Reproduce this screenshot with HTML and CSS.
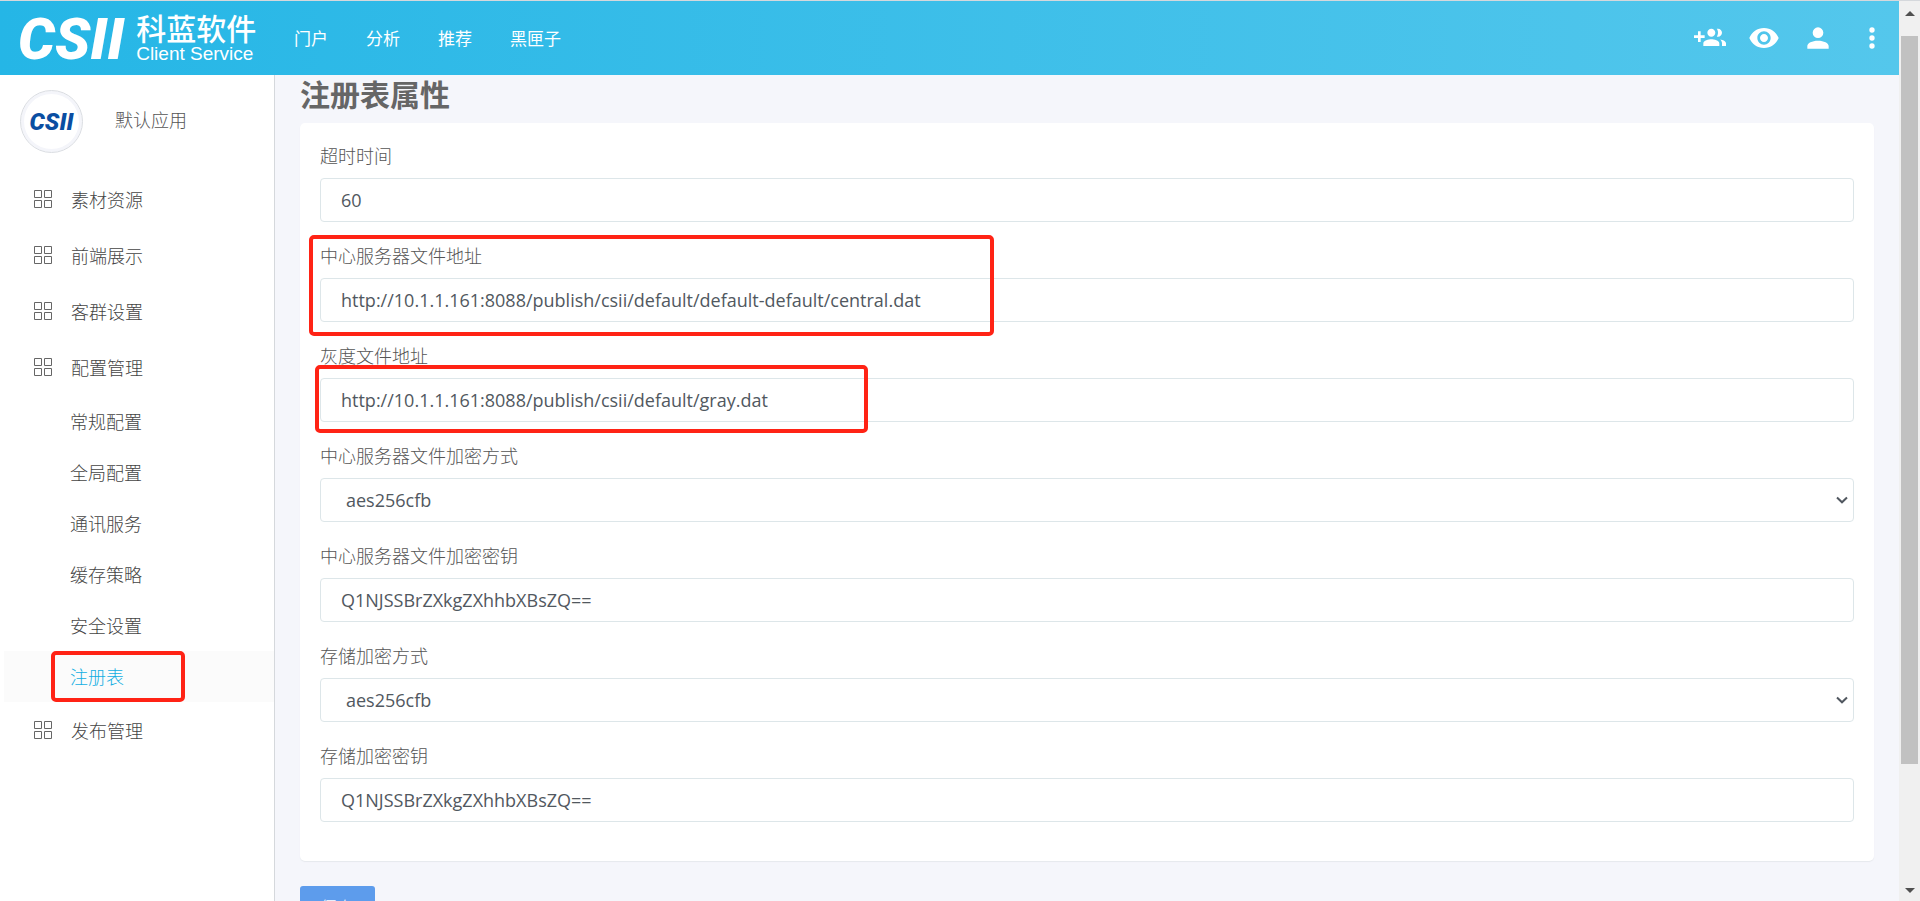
FILE: index.html
```html
<!DOCTYPE html>
<html lang="zh-CN">
<head>
<meta charset="utf-8">
<title>注册表属性</title>
<link rel="stylesheet" href="styles.css">
</head>
<body>
<svg class="defs" aria-hidden="true">
  <symbol id="grid" viewBox="0 0 18 18"><path fill="none" stroke="currentColor" d="M.5.5h7v7h-7zM10.500.5h7v7h-7zM.5 10.500h7v7h-7zM10.500 10.500h7v7h-7z"/></symbol>
  <symbol id="chevron" viewBox="0 0 12 8"><path fill="none" stroke="currentColor" stroke-width="2" d="M1 1.500 6 6.300 11 1.500"/></symbol>
</svg>
<div class="app">
  <header class="topbar">
    <a class="brand" href="#">
      <span class="mark">CSII</span>
      <span class="brand-text"><span class="brand-cn">科蓝软件</span><span class="brand-en">Client Service</span></span>
    </a>
    <nav class="topnav">
      <a href="#">门户</a><a href="#">分析</a><a href="#">推荐</a><a href="#">黑匣子</a>
    </nav>
    <div class="actions">
      <button type="button" aria-label="添加用户"><svg viewBox="0 0 24 24"><path d="M13 13C11 13 7 14 7 16V18H19V16C19 14 15 13 13 13M19.620 13.160C20.450 13.880 21 14.820 21 16V18H24V16C24 14.460 21.630 13.500 19.620 13.160M13 11C14.660 11 16 9.660 16 8S14.660 5 13 5 10 6.340 10 8 11.340 11 13 11M18 11C19.660 11 21 9.660 21 8S19.660 5 18 5C17.680 5 17.370 5.050 17.080 5.140C17.650 5.950 18 6.940 18 8S17.650 10.040 17.080 10.850C17.370 10.950 17.680 11 18 11M8 10H5V7H3V10H0V12H3V15H5V12H8V10Z"/></svg></button>
      <button type="button" aria-label="查看"><svg viewBox="0 0 24 24"><path d="M12 4.500C7 4.500 2.730 7.610 1 12c1.730 4.390 6 7.500 11 7.500s9.270-3.110 11-7.500c-1.730-4.390-6-7.500-11-7.500zM12 17c-2.760 0-5-2.240-5-5s2.240-5 5-5 5 2.240 5 5-2.240 5-5 5zm0-8c-1.660 0-3 1.340-3 3s1.340 3 3 3 3-1.340 3-3-1.340-3-3-3z"/></svg></button>
      <button type="button" aria-label="用户"><svg viewBox="0 0 24 24"><path d="M12 4a4 4 0 1 1 0 8 4 4 0 0 1 0-8m0 10c4.420 0 8 1.790 8 4v2H4v-2c0-2.210 3.580-4 8-4z"/></svg></button>
      <button type="button" aria-label="更多"><svg viewBox="0 0 24 24"><path d="M12 16a2 2 0 1 1 0 4 2 2 0 0 1 0-4m0-6a2 2 0 1 1 0 4 2 2 0 0 1 0-4m0-6a2 2 0 1 1 0 4 2 2 0 0 1 0-4z"/></svg></button>
    </div>
  </header>
  <aside class="sidebar">
    <div class="profile">
      <span class="avatar"><span class="mark mark-small">CSII</span></span>
      <span class="profile-name">默认应用</span>
    </div>
    <nav class="menu">
      <a class="item" href="#"><svg><use href="#grid"/></svg>素材资源</a>
      <a class="item" href="#"><svg><use href="#grid"/></svg>前端展示</a>
      <a class="item" href="#"><svg><use href="#grid"/></svg>客群设置</a>
      <a class="item" href="#"><svg><use href="#grid"/></svg>配置管理</a>
      <div class="submenu">
        <a href="#">常规配置</a>
        <a href="#">全局配置</a>
        <a href="#">通讯服务</a>
        <a href="#">缓存策略</a>
        <a href="#">安全设置</a>
        <a class="active" href="#">注册表<span class="marker marker-menu"></span></a>
      </div>
      <a class="item" href="#"><svg><use href="#grid"/></svg>发布管理</a>
    </nav>
  </aside>
  <main class="content">
    <h1>注册表属性</h1>
    <form>
      <div class="card">
        <div class="field"><label for="timeout">超时时间</label><input id="timeout" type="text" value="60"></div>
        <div class="field"><label for="central">中心服务器文件地址</label><input id="central" type="text" value="http://10.1.1.161:8088/publish/csii/default/default-default/central.dat"><span class="marker marker-central"></span></div>
        <div class="field"><label for="gray">灰度文件地址</label><input id="gray" type="text" value="http://10.1.1.161:8088/publish/csii/default/gray.dat"><span class="marker marker-gray"></span></div>
        <div class="field"><label for="central-mode">中心服务器文件加密方式</label><select id="central-mode"><option>aes256cfb</option></select><svg class="chevron"><use href="#chevron"/></svg></div>
        <div class="field"><label for="central-key">中心服务器文件加密密钥</label><input id="central-key" type="text" value="Q1NJSSBrZXkgZXhhbXBsZQ=="></div>
        <div class="field"><label for="store-mode">存储加密方式</label><select id="store-mode"><option>aes256cfb</option></select><svg class="chevron"><use href="#chevron"/></svg></div>
        <div class="field"><label for="store-key">存储加密密钥</label><input id="store-key" type="text" value="Q1NJSSBrZXkgZXhhbXBsZQ=="></div>
      </div>
      <button class="save" type="submit">保存</button>
    </form>
  </main>
  <div class="scrollbar" aria-hidden="true">
    <svg viewBox="0 0 10 5"><path d="M5 0 10 5H0z"/></svg>
    <span class="thumb"></span>
    <svg viewBox="0 0 10 5"><path d="M0 0H10L5 5z"/></svg>
  </div>
</div>
</body>
</html>
```
FILE: styles.css
```css
* { box-sizing: border-box; }
body {
  margin: 0;
  color: #555;
  font: 300 18px/26px "Noto Sans CJK SC", sans-serif;
}
a { color: inherit; text-decoration: none; }
button, input, select { font: inherit; }
.defs { display: none; }

.app {
  display: grid;
  grid-template: 75px minmax(0, 1fr) / 275px minmax(0, 1fr) 21px;
  height: 100vh;
  overflow: hidden;
  background: #f5f6fb;
}

.topbar {
  grid-column: 1 / 3;
  display: flex;
  align-items: center;
  padding: 0 11px 0 18px;
  border-top: 1px solid #d5d8dc;
  background: linear-gradient(90deg, #25b6e6, #54c7ec);
  color: #fff;
}
.brand { display: flex; align-items: center; gap: 12px; width: 276px; }
.mark {
  padding-top: 2px;
  font: italic 900 58px/58px Roboto, sans-serif;
}
.brand-text { display: flex; flex-direction: column; }
.brand-cn { font-size: 30px; font-weight: 500; line-height: 32px; }
.brand-en { font: 19px/22px "Liberation Sans", sans-serif; }
.topnav { display: flex; gap: 38px; font-size: 17px; font-weight: 400; }
.actions { display: flex; gap: 22px; margin-left: auto; }
.actions button {
  width: 32px;
  height: 32px;
  padding: 0;
  border: 0;
  background: none;
}
.actions svg { display: block; width: 32px; height: 32px; fill: #fff; }

.sidebar {
  border-right: 1px solid #d5d8dc;
  background: #fff;
}
.profile {
  display: flex;
  align-items: center;
  gap: 32px;
  height: 96px;
  padding: 0 20px 4px;
}
.profile-name { padding-bottom: 4px; }
.avatar {
  display: flex;
  align-items: center;
  justify-content: center;
  width: 63px;
  height: 63px;
  border: 1px solid #dadde2;
  border-radius: 50%;
  box-shadow: inset 0 0 0 3px #f4f5fa;
}
.mark-small { padding: 2px 0 0; color: #0a4ea2; font-size: 24px; line-height: 24px; }
.menu { color: #444; }
.item { display: flex; align-items: center; gap: 19px; height: 56px; padding-left: 34px; }
.item svg { width: 18px; height: 18px; color: #666; }
.submenu { padding: 1px 0 0 4px; }
.submenu a { display: block; height: 51px; padding: 12px 0 0 66px; }
.submenu .active { position: relative; background: #fbfbfb; color: #12aee2; }

.content { padding: 0 25px; overflow: hidden; }
h1 {
  margin: 0 0 12px;
  color: #666;
  font-size: 30px;
  font-weight: 700;
  line-height: 36px;
}
.card {
  padding: 19px 20px;
  border-radius: 5px;
  background: #fff;
  box-shadow: 0 1px 1px #e6e9ed;
}
.field { position: relative; margin-bottom: 20px; }
.field label { display: block; margin-bottom: 10px; }
.field input, .field select {
  display: block;
  width: 100%;
  height: 44px;
  padding: 0 20px;
  border: 1px solid #dde6e9;
  border-radius: 4px;
  background: #fff;
  color: #515860;
  font: 400 18px/27px "Open Sans", sans-serif;
}
.field select { padding: 0 25px; appearance: none; }
.chevron {
  position: absolute;
  right: 6px;
  bottom: 18px;
  width: 12px;
  height: 8px;
  color: #515860;
  pointer-events: none;
}
.save {
  margin-top: 25px;
  width: 75px;
  height: 42px;
  border: 0;
  border-radius: 3px;
  background: #5d9cec;
  color: #fff;
}

.marker {
  position: absolute;
  border: 4px solid #ff2315;
  border-radius: 5px;
  pointer-events: none;
}
.marker-menu { inset: 0 89px 0 47px; }
.marker-central { top: -7px; left: -11px; width: 685px; height: 101px; }
.marker-gray { top: 23px; left: -5px; width: 553px; height: 68px; }

.scrollbar {
  grid-area: 1 / 3 / 3 / 4;
  display: flex;
  flex-direction: column;
  align-items: center;
  padding: 10px 2px 8px;
  border-top: 1px solid #d5d8dc;
  background: #f0f0f0;
}
.scrollbar svg { width: 10px; height: 5px; fill: #505050; }
.thumb { flex: 1; width: 17px; margin: 20px 0 124px; background: #c1c1c1; }
```
